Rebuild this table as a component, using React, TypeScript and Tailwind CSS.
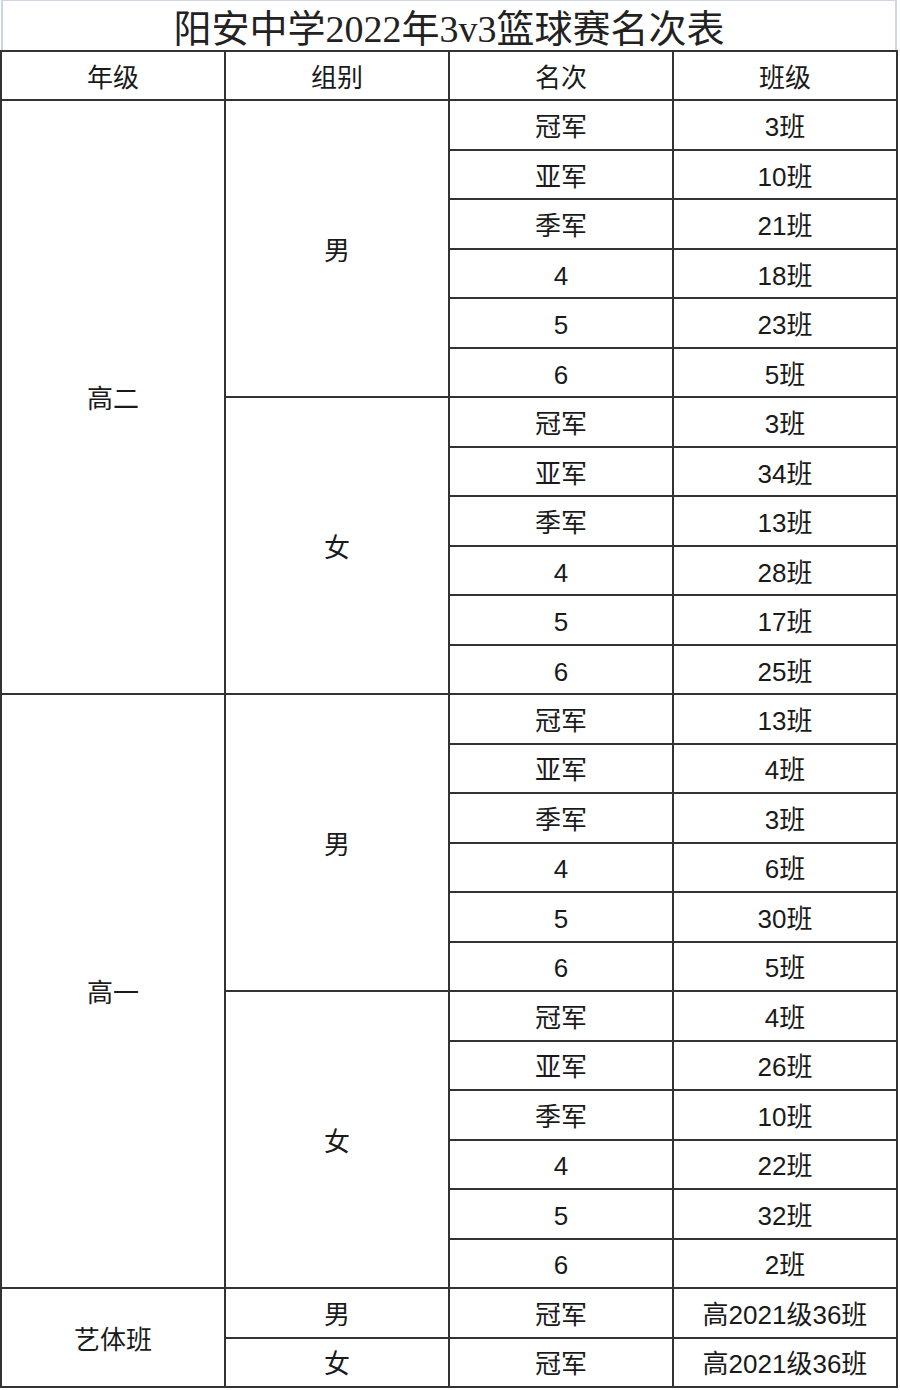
import React from "react";

type Row = { rank: string; cls: string };

const groups: { grade: string; sexes: { sex: string; rows: Row[] }[] }[] = [
  {
    grade: "高二",
    sexes: [
      {
        sex: "男",
        rows: [
          { rank: "冠军", cls: "3班" },
          { rank: "亚军", cls: "10班" },
          { rank: "季军", cls: "21班" },
          { rank: "4", cls: "18班" },
          { rank: "5", cls: "23班" },
          { rank: "6", cls: "5班" },
        ],
      },
      {
        sex: "女",
        rows: [
          { rank: "冠军", cls: "3班" },
          { rank: "亚军", cls: "34班" },
          { rank: "季军", cls: "13班" },
          { rank: "4", cls: "28班" },
          { rank: "5", cls: "17班" },
          { rank: "6", cls: "25班" },
        ],
      },
    ],
  },
  {
    grade: "高一",
    sexes: [
      {
        sex: "男",
        rows: [
          { rank: "冠军", cls: "13班" },
          { rank: "亚军", cls: "4班" },
          { rank: "季军", cls: "3班" },
          { rank: "4", cls: "6班" },
          { rank: "5", cls: "30班" },
          { rank: "6", cls: "5班" },
        ],
      },
      {
        sex: "女",
        rows: [
          { rank: "冠军", cls: "4班" },
          { rank: "亚军", cls: "26班" },
          { rank: "季军", cls: "10班" },
          { rank: "4", cls: "22班" },
          { rank: "5", cls: "32班" },
          { rank: "6", cls: "2班" },
        ],
      },
    ],
  },
];

const cell = "bg-white flex items-center justify-center pt-[4px]";

export default function App() {
  const cells: React.ReactNode[] = [];
  ["年级", "组别", "名次", "班级"].forEach((h) =>
    cells.push(
      <div key={"h" + h} className={cell}>
        {h}
      </div>
    )
  );
  groups.forEach((g, gi) => {
    g.sexes.forEach((s, si) => {
      s.rows.forEach((r, ri) => {
        if (si === 0 && ri === 0) {
          cells.push(
            <div key={`g${gi}`} className={`${cell} row-span-12`}>
              {g.grade}
            </div>
          );
        }
        if (ri === 0) {
          cells.push(
            <div key={`s${gi}${si}`} className={`${cell} row-span-6`}>
              {s.sex}
            </div>
          );
        }
        cells.push(
          <div key={`r${gi}${si}${ri}`} className={cell}>
            {r.rank}
          </div>
        );
        cells.push(
          <div key={`c${gi}${si}${ri}`} className={cell}>
            {r.cls}
          </div>
        );
      });
    });
  });
  cells.push(
    <div key="yt" className={`${cell} row-span-2`}>
      艺体班
    </div>
  );
  cells.push(<div key="yt1" className={cell}>男</div>);
  cells.push(<div key="yt2" className={cell}>冠军</div>);
  cells.push(<div key="yt3" className={cell}>高2021级36班</div>);
  cells.push(<div key="yt4" className={cell}>女</div>);
  cells.push(<div key="yt5" className={cell}>冠军</div>);
  cells.push(<div key="yt6" className={cell}>高2021级36班</div>);

  return (
    <div className="w-[900px] h-[1390px] bg-white">
      <div className="ml-[1px] w-[896px] h-[50px] border-t border-l-2 border-r-2 border-[#cdd5e6] flex items-center justify-center">
        <span className="font-['Liberation_Serif','Noto_Sans_CJK_SC',serif] text-[38px] leading-none text-[#222] mt-[7px]">
          阳安中学2022年3v3篮球赛名次表
        </span>
      </div>
      <div className="w-[898px] h-[1338px] bg-[#333] p-[2px] gap-[2px] grid grid-cols-[repeat(4,minmax(0,1fr))] grid-rows-[repeat(27,minmax(0,1fr))] font-['Liberation_Sans','Noto_Sans_CJK_SC',sans-serif] text-[26px] leading-none text-[#1a1a1a]">
        {cells}
      </div>
    </div>
  );
}
